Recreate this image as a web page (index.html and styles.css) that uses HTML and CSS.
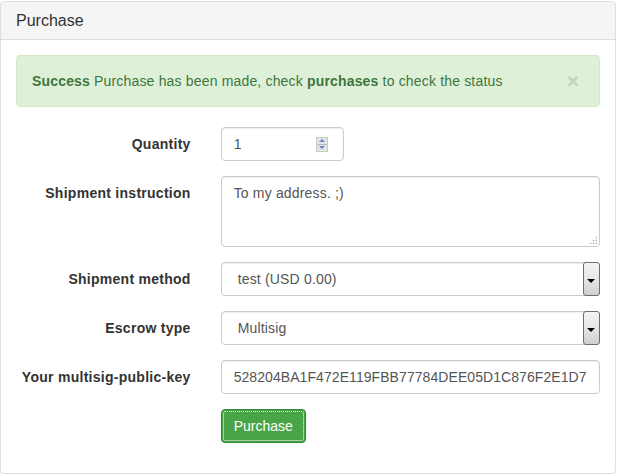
FILE: index.html
```html
<!DOCTYPE html>
<html>
<head>
<meta charset="utf-8">
<link rel="stylesheet" href="styles.css">
</head>
<body>
<div class="panel">
  <div class="panel-heading"><h3 class="panel-title">Purchase</h3></div>
  <div class="panel-body">
    <div class="alert">
      <span class="alert-text"><strong>Success</strong> Purchase has been made, check <strong>purchases</strong> to check the status</span>
      <span class="close">×</span>
    </div>
    <form class="form">
      <div class="group">
        <label class="label">Quantity</label>
        <div class="field">
          <div class="control qty">
            <span class="val">1</span>
            <span class="spin"><span class="up"></span><span class="down"></span></span>
          </div>
        </div>
      </div>
      <div class="group">
        <label class="label">Shipment instruction</label>
        <div class="field">
          <div class="control area">To my address. ;)<span class="grip"></span></div>
        </div>
      </div>
      <div class="group">
        <label class="label">Shipment method</label>
        <div class="field">
          <div class="control select"><span class="sel-text">test (USD 0.00)</span><span class="arrow"></span></div>
        </div>
      </div>
      <div class="group">
        <label class="label">Escrow type</label>
        <div class="field">
          <div class="control select"><span class="sel-text">Multisig</span><span class="arrow"></span></div>
        </div>
      </div>
      <div class="group">
        <label class="label">Your multisig-public-key</label>
        <div class="field">
          <div class="control key">528204BA1F472E119FBB77784DEE05D1C876F2E1D7</div>
        </div>
      </div>
      <div class="group">
        <div class="label"></div>
        <div class="field">
          <button type="button" class="btn">Purchase</button>
        </div>
      </div>
    </form>
  </div>
</div>
</body>
</html>
```

FILE: styles.css
```css
* { box-sizing: border-box; }
html, body { margin: 0; padding: 0; background: #fff; }
body {
  padding-top: 1px;
  font-family: "Liberation Sans", Arial, sans-serif;
  font-size: 14px;
  line-height: 20px;
  color: #333;
}
.panel {
  width: 616px;
  border: 1px solid #ddd;
  border-radius: 4px;
  box-shadow: 0 1px 1px rgba(0,0,0,0.05);
}
.panel-heading {
  background: #f5f5f5;
  border-bottom: 1px solid #ddd;
  border-radius: 3px 3px 0 0;
  padding: 10px 15px;
}
.panel-title {
  margin: 0;
  font-size: 16px;
  font-weight: normal;
  line-height: 17px;
  color: #333;
}
.panel-body { padding: 15px; }
.alert {
  display: flex;
  align-items: flex-start;
  justify-content: space-between;
  background: #dff0d8;
  border: 1px solid #d6e9c6;
  border-radius: 4px;
  color: #3c763d;
  padding: 15px 20px 15px 15px;
  margin-bottom: 20px;
}
.alert-text { letter-spacing: 0.17px; }
.alert strong { font-weight: bold; }
.close {
  font-size: 21px;
  font-weight: bold;
  line-height: 20px;
  color: #3c763d;
  opacity: 0.2;
}
.form { margin: 0 -15px; }
.group {
  display: flex;
  margin-bottom: 15px;
}
.label {
  flex: 0 0 33.333%;
  padding: 7px 15px 0;
  text-align: right;
  font-weight: bold;
  letter-spacing: 0.27px;
}
.field {
  flex: 0 0 66.667%;
  padding: 0 15px;
}
.control {
  display: flex;
  align-items: center;
  height: 34px;
  padding: 6px 12px;
  border: 1px solid #ccc;
  border-radius: 4px;
  color: #555;
  background: #fff;
  letter-spacing: 0.17px;
  box-shadow: inset 0 1px 1px rgba(0,0,0,0.075);
}
.qty {
  width: 123px;
  justify-content: space-between;
  padding-right: 15px;
}
.spin {
  display: flex;
  flex-direction: column;
  width: 12px;
  height: 15px;
  border: 1px solid #c8c8c8;
  background: #e4e4e4;
}
.spin .up, .spin .down {
  flex: 1;
  display: flex;
  align-items: center;
  justify-content: center;
}
.spin .up { border-bottom: 1px solid #b8b8b8; }
.spin .up::before {
  content: "";
  border-left: 3px solid transparent;
  border-right: 3px solid transparent;
  border-bottom: 3px solid #6b84c4;
}
.spin .down::before {
  content: "";
  border-left: 3px solid transparent;
  border-right: 3px solid transparent;
  border-top: 3px solid #6b84c4;
}
.area {
  position: relative;
  height: 71px;
  align-items: flex-start;
}
.grip {
  position: absolute;
  right: 2px;
  bottom: 2px;
  width: 8px;
  height: 8px;
  background:
    radial-gradient(circle, #b0b0b0 0.8px, transparent 1.1px) 0 0 / 3px 3px;
  clip-path: polygon(100% 0, 100% 100%, 0 100%);
}
.select {
  padding: 0 0 0 16px;
  justify-content: space-between;
}
.sel-text { line-height: 20px; }
.arrow {
  display: flex;
  align-items: center;
  justify-content: center;
  width: 17px;
  height: 34px;
  margin: -1px -1px -1px 0;
  border: 1px solid #6d6d6d;
  border-radius: 3px;
  background: linear-gradient(#f4f4f4, #e6e6e6 50%, #cfcfcf);
  padding-top: 3px;
}
.arrow::before {
  content: "";
  border-left: 4px solid transparent;
  border-right: 4px solid transparent;
  border-top: 4px solid #000;
}
.key { white-space: nowrap; overflow: hidden; letter-spacing: 0.07px; }
.btn {
  height: 34px;
  padding: 6px 12px;
  font-family: inherit;
  font-size: 14px;
  line-height: 20px;
  color: #fff;
  background: #47a447;
  border: 1px solid #398439;
  border-radius: 4px;
  outline: 1px dotted #fff;
  outline-offset: -3px;
}
```
